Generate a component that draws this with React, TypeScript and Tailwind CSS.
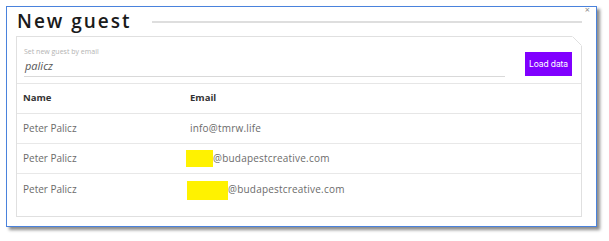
import React from 'react';

// ─── data ─────────────────────────────────────────────────────────────────────

const guests = [
  { name: 'Peter Palicz', local: null, domain: 'info@tmrw.life' },
  { name: 'Peter Palicz', local: 'w-[27px] h-[17px] ml-[-4px]', domain: '@budapestcreative.com' },
  { name: 'Peter Palicz', local: 'w-[41px] h-[19px] ml-[-3px] mt-[3px]', domain: '@budapestcreative.com' },
];

const font = { fontFamily: '"Open Sans", "Liberation Sans", sans-serif' };

// ─── component ────────────────────────────────────────────────────────────────

export default function App() {
  return (
    <div className="w-[609px] h-[241px] bg-white overflow-hidden" style={font}>
      <div className="relative ml-[6px] mt-[6px] w-[591px] h-[221px] border border-[#4a82dc] bg-white shadow-[3px_3px_3px_rgba(0,0,0,0.45)] pl-[9px] pr-[14px]">
        {/* close */}
        <span className="absolute top-[-2px] right-[6px] text-[9px] leading-none text-[#8a8a8a]">×</span>

        {/* Title */}
        <div className="flex items-center h-[29px]">
          <h1 className="text-[19px] font-semibold tracking-[2px] text-[#1a1a1a] leading-none pl-[1px]">New guest</h1>
          <div className="flex-1 ml-[20px] h-[2px] bg-[#dedede]" />
        </div>

        {/* Card */}
        <div className="relative h-[181px] border border-[#e0e0e0] bg-white">
          {/* cut corner */}
          <div className="absolute top-[-1px] right-[-1px] w-[10px] h-[10px] bg-white">
            <svg width="10" height="10" viewBox="0 0 10 10">
              <line x1="0.5" y1="0.5" x2="9.5" y2="9.5" stroke="#e0e0e0" strokeWidth="1" />
            </svg>
          </div>

          {/* Search */}
          <div className="flex items-start h-[47px] pl-[7px] pr-[9px] border-b border-[#e6e6e6]">
            <div className="flex-1 pt-[11px] mr-[20px]">
              <div className="text-[7px] leading-none text-[#b3b3b3]">Set new guest by email</div>
              <div className="mt-[4px] pb-[3px] text-[11px] italic leading-[14px] text-[#555] pl-[1px] border-b border-[#d9d9d9]">palicz</div>
            </div>
            <button className="mt-[15px] w-[47px] h-[24px] bg-[#8000ff] text-white text-[8.5px] leading-none tracking-[-0.1px]" style={{ fontFamily: 'Inter, "Liberation Sans", sans-serif' }}>
              Load data
            </button>
          </div>

          {/* Table */}
          <div className="grid grid-cols-[167px_1fr] h-[30px] items-center border-b border-[#e6e6e6] px-[6px] text-[9.5px] font-bold text-[#333]">
            <span>Name</span>
            <span>Email</span>
          </div>
          {guests.map((g, i) => (
            <div
              key={i}
              className={`grid grid-cols-[167px_1fr] h-[30px] items-center px-[6px] text-[10px] text-[#6b6b6b] ${i < guests.length - 1 ? 'border-b border-[#e8e8e8]' : ''}`}
            >
              <span>{g.name}</span>
              <span className="flex items-center tracking-[0.2px]">
                {g.local && <span className={`inline-block bg-[#fff200] ${g.local}`} />}
                {g.domain}
              </span>
            </div>
          ))}
        </div>
      </div>
    </div>
  );
}
